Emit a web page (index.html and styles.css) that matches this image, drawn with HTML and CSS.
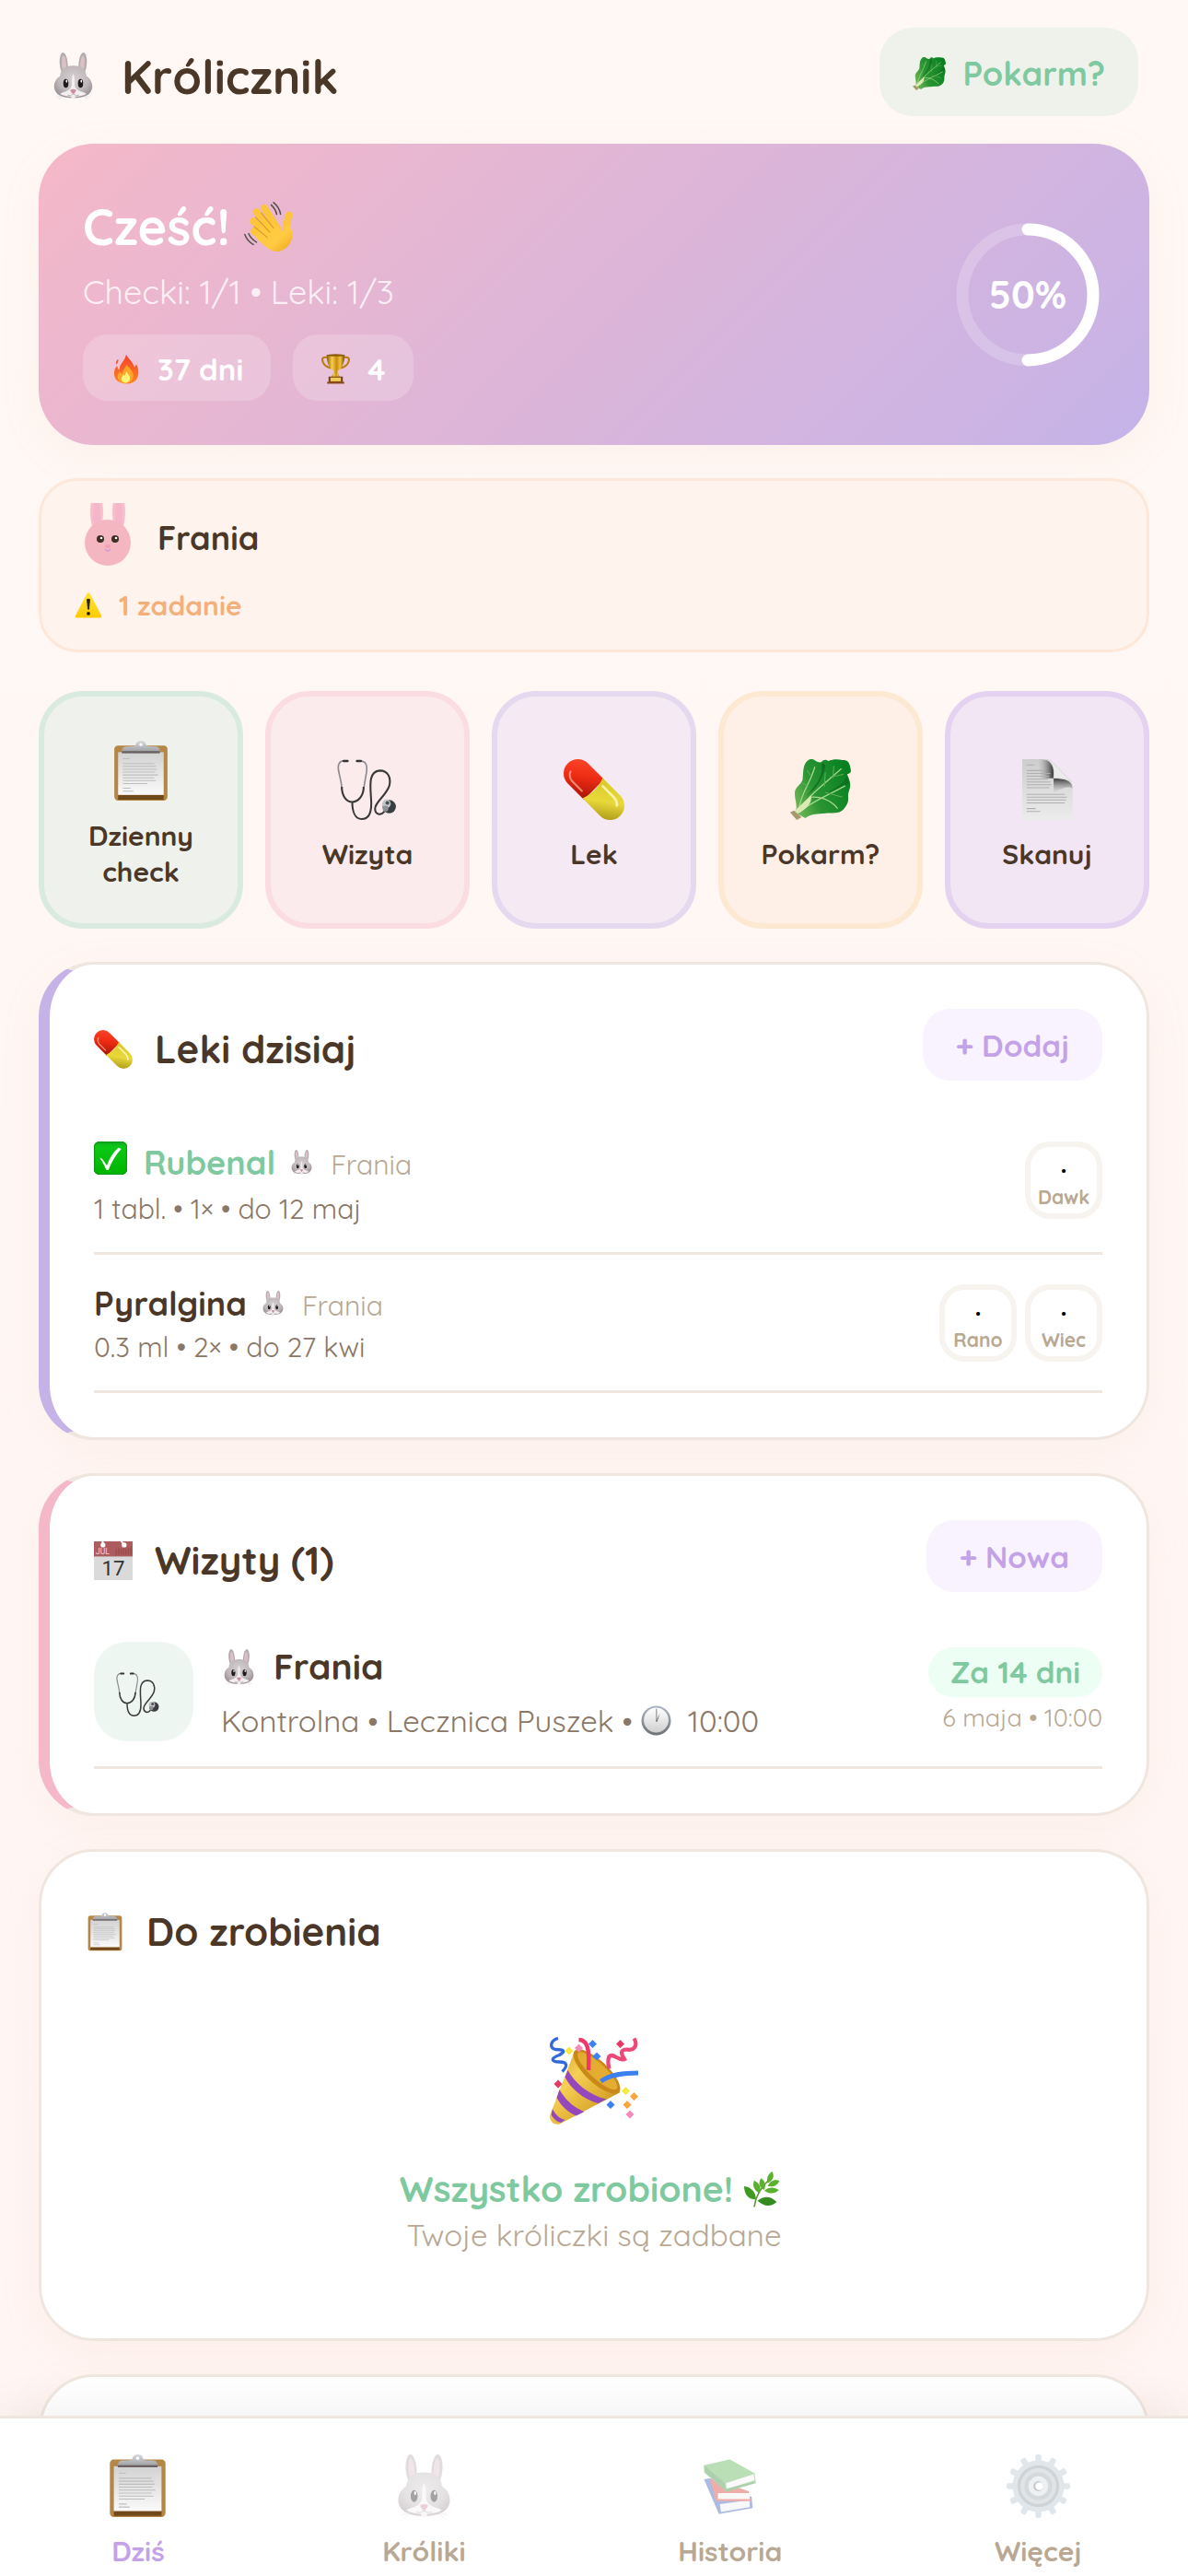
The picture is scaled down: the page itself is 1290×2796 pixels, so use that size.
FILE: index.html
```html
<!DOCTYPE html>
<html lang="pl">
<head>
<meta charset="utf-8">
<meta name="viewport" content="width=device-width, initial-scale=1">
<title>Królicznik</title>
<link rel="stylesheet" href="styles.css">
</head>
<body>
<svg class="sprite" aria-hidden="true">
  <defs>
    <radialGradient id="fur" cx=".5" cy=".4" r=".65"><stop offset="0" stop-color="#d6d0d2"/><stop offset=".6" stop-color="#c0b8bb"/><stop offset="1" stop-color="#978c90"/></radialGradient>
    <linearGradient id="hand" x1="0" y1="0" x2="1" y2="1"><stop offset="0" stop-color="#ffc83a"/><stop offset=".6" stop-color="#ffcb42"/><stop offset="1" stop-color="#eda51f"/></linearGradient>
    <linearGradient id="flame" x1="0" y1="0" x2="0" y2="1"><stop offset="0" stop-color="#f4412c"/><stop offset="1" stop-color="#ff8420"/></linearGradient>
    <linearGradient id="gold" x1="0" y1="0" x2="1" y2="0"><stop offset="0" stop-color="#8c5a04"/><stop offset=".3" stop-color="#f6cd4b"/><stop offset=".55" stop-color="#c98d10"/><stop offset=".75" stop-color="#f0c040"/><stop offset="1" stop-color="#7c4c02"/></linearGradient>
    <linearGradient id="leaf" x1="0" y1=".7" x2="1" y2=".3"><stop offset="0" stop-color="#6cb454"/><stop offset=".35" stop-color="#2a9433"/><stop offset="1" stop-color="#078021"/></linearGradient>
    <linearGradient id="paper" x1="0" y1="0" x2="0" y2="1"><stop offset="0" stop-color="#d2d2d3"/><stop offset="1" stop-color="#fafafa"/></linearGradient>
    <linearGradient id="steel" x1="0" y1="0" x2="0" y2="1"><stop offset="0" stop-color="#d8dade"/><stop offset="1" stop-color="#96989c"/></linearGradient>
    <linearGradient id="red" x1="0" y1="1" x2="1" y2="0"><stop offset="0" stop-color="#a81505"/><stop offset=".5" stop-color="#ee2c14"/><stop offset="1" stop-color="#ff4a2e"/></linearGradient>
    <linearGradient id="yellow" x1="0" y1="1" x2="1" y2="0"><stop offset="0" stop-color="#a08c10"/><stop offset=".5" stop-color="#e8d83a"/><stop offset="1" stop-color="#d8c828"/></linearGradient>
    <linearGradient id="warn" x1="0" y1="0" x2="0" y2="1"><stop offset="0" stop-color="#ffe43a"/><stop offset="1" stop-color="#ffcb00"/></linearGradient>
    <linearGradient id="page" x1="0" y1="0" x2="0" y2="1"><stop offset="0" stop-color="#cdcdcd"/><stop offset="1" stop-color="#ececec"/></linearGradient>
    <linearGradient id="shade" x1="0" y1="0" x2="0" y2="1"><stop offset="0" stop-color="#333"/><stop offset="1" stop-color="#aaa" stop-opacity="0"/></linearGradient>
    <linearGradient id="fold" x1="0" y1="0" x2="1" y2="0"><stop offset="0" stop-color="#aaa" stop-opacity="0"/><stop offset="1" stop-color="#333"/></linearGradient>
    <linearGradient id="dial" x1="0" y1="0" x2="0" y2="1"><stop offset="0" stop-color="#ffffff"/><stop offset="1" stop-color="#cfcfcf"/></linearGradient>
    <linearGradient id="rim" x1="0" y1="0" x2="0" y2="1"><stop offset="0" stop-color="#aab6c4"/><stop offset="1" stop-color="#6f7174"/></linearGradient>
    <linearGradient id="tick" x1="0" y1="0" x2="0" y2="1"><stop offset="0" stop-color="#15a524"/><stop offset=".15" stop-color="#0cc816"/><stop offset="1" stop-color="#00b400"/></linearGradient>
    <linearGradient id="cone" x1="0" y1="0" x2="1" y2="1"><stop offset="0" stop-color="#d9a32a"/><stop offset=".35" stop-color="#f6cf55"/><stop offset=".7" stop-color="#dba82c"/><stop offset="1" stop-color="#8d5d10"/></linearGradient>
  </defs>

  <symbol id="i-rabbit" viewBox="0 0 64 64">
    <ellipse cx="19" cy="15" rx="5.500" ry="15" fill="#b3acae" transform="rotate(-4 19 15)"/>
    <ellipse cx="45" cy="15" rx="5.500" ry="15" fill="#b3acae" transform="rotate(4 45 15)"/>
    <ellipse cx="19.500" cy="16" rx="3" ry="12" fill="#dcc0c6" transform="rotate(-4 19 16)"/>
    <ellipse cx="44.500" cy="16" rx="3" ry="12" fill="#dcc0c6" transform="rotate(4 44 16)"/>
    <path d="M32 18c-10 0-17 4-18 14-6 4-8 9-8 15 1 11 12 15 26 15s25-4 26-15c0-6-2-11-8-15-1-10-8-14-18-14z" fill="url(#fur)"/>
    <path d="M32 29c-2 3-2 9-2 14 0 5-3 8-8 10-4 1-6 2-8 3 4 3 12 4 18 4s14-1 18-4c-2-1-4-2-8-3-5-2-8-5-8-10 0-5 0-11-2-14z" fill="#f3eff0"/>
    <ellipse cx="22" cy="42" rx="3.500" ry="6" fill="#1d1b1d"/><ellipse cx="42" cy="42" rx="3.500" ry="6" fill="#1d1b1d"/>
    <ellipse cx="23" cy="39" rx="1.100" ry="2" fill="#fff"/><ellipse cx="43" cy="39" rx="1.100" ry="2" fill="#fff"/>
    <path d="M28 51q4-2 8 0 0 2-4 6-4-4-4-6z" fill="#cf8c9a"/>
    <path d="M24 58q5 2 8-2 3 4 8 2" fill="none" stroke="#b5aaad" stroke-width="1"/>
    <rect x="29" y="58" width="6" height="5" rx="2" fill="#f1ece9"/>
    <path d="M17 59l-8 2M17 60l-5 4M47 59l8 2M47 60l5 4" stroke="#d8d0d2" stroke-width=".7"/>
  </symbol>

  <symbol id="i-lettuce" viewBox="0 0 64 64">
    <path d="M5 56C9 50 4 42 5 34c1-5 6-7 8-12 1-7 0-14 4-19 3-4 7-4 10-1 2 1 4 2 6 1 2-3 5-3 7-1 5-2 10-2 15-1 7-1 8 5 9 11 0 3-3 3-4 4 2 5 4 9 3 14-1 3-2 6-2 9 1 5-1 10-5 14-5 5-12 3-19 4-8 1-14 0-21 5z" fill="url(#leaf)"/>
    <path d="M33 5c2 12-4 20-16 34 12-9 17-18 20-31 0-3-2-4-4-3z" fill="#0a5d1a" opacity=".6"/>
    <path d="M60 17c-4 10-14 14-22 19 10-2 19-6 24-11z" fill="#0a5d1a" opacity=".4"/>
    <path d="M10 56c8-18 24-28 44-46M12 54c12-10 28-16 46-26M9 54c2-18 12-28 17-46M22 40c8-1 20 2 28 12" fill="none" stroke="#a9d88d" stroke-width="1.200"/>
    <path d="M36 29l1-15M45 20l1-13M42 19l14-3M37 35l18 5M18 28l-6-3M22 18l-4-6" fill="none" stroke="#5fae55" stroke-width="1"/>
    <path d="M5 54l17-16c1 7-2 13-15 20z" fill="#d9eab4"/>
    <path d="M0 56l4-2 8 7-5 3z" fill="#a79870"/>
  </symbol>

  <symbol id="i-wave" viewBox="0 0 64 64">
    <g fill="none" stroke="#fdc53c" stroke-linecap="round" stroke-width="9">
      <path d="M26 8l18 28M16 13l20 26M12 25l22 20M13 38l20 14"/>
      <path d="M58 17c-3 6-3 12-4 22"/>
    </g>
    <path d="M33 26c6 1 14 8 17 13 2-2 2-6 5-9 5 0 8 8 7 16-2 10-10 18-20 18-9 0-17-9-26-17 0-10 9-21 17-21z" fill="url(#hand)"/>
    <path d="M22 14l16 20M15 20l18 19M13 32l17 14" stroke="#dc952b" stroke-width="1.300" stroke-linecap="round" fill="none"/>
    <path d="M38 1c5 4 8 9 9 15M35 4c4 4 6 7 7 12M1 42c2 6 6 10 11 13M6 41c2 5 5 8 10 11" stroke="#57504f" stroke-width="1.800" stroke-linecap="round" fill="none"/>
  </symbol>

  <symbol id="i-fire" viewBox="0 0 64 64">
    <path d="M33 1c3 9 15 16 17 27 3-1 4-4 4-7 7 12 6 28-1 35-11 10-32 9-41-1-6-8-6-22 2-30 1 5 2 8 5 9-1-14 12-18 14-33z" fill="url(#flame)"/>
    <path d="M34 22c3 8 14 12 14 25 0 9-8 15-17 15S15 56 15 48c0-5 2-8 4-11 2 4 4 5 6 5 0-8 7-11 9-20z" fill="#ffa52a"/>
    <path d="M33 36c2 5 8 9 8 16 0 5-4 9-9 9s-9-3-9-8 3-7 4-10c1 2 2 3 3 3 1-3 3-5 3-10z" fill="#fff47a"/>
    <ellipse cx="14" cy="17" rx="2" ry="5" fill="#f2552f" transform="rotate(20 14 17)"/>
  </symbol>

  <symbol id="i-trophy" viewBox="0 0 64 64">
    <path d="M16 8C5 5 2 10 5 17c3 8 9 11 17 13M48 8c11-3 14 2 11 9-3 8-9 11-17 13" fill="none" stroke="#b87f10" stroke-width="4"/>
    <path d="M13 2h38c0 14-4 29-15 34v8h-8v-8C17 31 13 16 13 2z" fill="url(#gold)"/>
    <ellipse cx="32" cy="3" rx="19" ry="2.500" fill="#8a5c08"/>
    <path d="M27 41h10l4 9H23z" fill="url(#gold)"/>
    <path d="M17 48h30v12H17z" fill="#7a3d10"/><path d="M21 50h22v8H21z" fill="#eacb5c"/>
    <path d="M14 59h36v4H14z" fill="#8b4a14"/>
  </symbol>

  <symbol id="i-warning" viewBox="0 0 64 64">
    <path d="M32 3c2 0 3 1 4 3l26 50c1 3 0 5-3 5H5c-3 0-4-2-3-5L28 6c1-2 2-3 4-3z" fill="url(#warn)"/>
    <path d="M29 18h6l-2 23h-2z" fill="#26200a" stroke="#26200a" stroke-linejoin="round" stroke-width="2"/><circle cx="32" cy="51" r="4" fill="#26200a"/>
  </symbol>

  <symbol id="i-clipboard" viewBox="0 0 64 64">
    <rect x="4" y="5" width="56" height="58" rx="4" fill="#b48746"/>
    <path d="M8 57h48v5H8z" fill="#714819"/>
    <rect x="8" y="12" width="48" height="45" fill="url(#paper)"/>
    <path d="M13 19h7M13 24h33M13 27h35M13 30h36M13 33h34M13 36h37M13 39h33M13 42h35M13 45h26M13 50h8M13 53h11" stroke="#bdbdbf" stroke-width="1"/>
    <path d="M12 10c1-4 3-4 8-4 5 0 6 0 7-3 1-4 9-4 10 0 1 3 2 3 7 3 5 0 7 0 8 4v3H12z" fill="url(#steel)"/>
    <path d="M12 11h40v2H12z" fill="#6a6060"/><circle cx="32" cy="4" r="1.600" fill="#fff"/>
  </symbol>

  <symbol id="i-stethoscope" viewBox="0 0 64 64">
    <path d="M9 2C2 1 0 6 2 14c1 6 3 10 3 18" fill="none" stroke="#8b8991" stroke-width="1.600"/>
    <path d="M22 2c9-1 10 5 9 12-1 6-2 10-3 18" fill="none" stroke="#8b8991" stroke-width="1.600"/>
    <path d="M5 29c0 10 5 16 11 16s12-6 12-16M16 45c0 10 3 18 10 18s10-6 10-16c0-14-5-34 9-35 9 0 12 8 10 16-3 10-15 17-15 24 0 6 6 8 10 3" fill="none" stroke="#38383b" stroke-width="2"/>
    <path d="M7 2h4M21 2h4" stroke="#333" stroke-width="2.500" stroke-linecap="round"/>
    <circle cx="55" cy="50" r="7" fill="#3b3e41"/><circle cx="52" cy="47" r="4.500" fill="#c2c5c8"/><circle cx="51" cy="52" r="3" fill="#8d9194"/><circle cx="53" cy="46" r="2" fill="#4c5054"/>
  </symbol>

  <symbol id="i-pill" viewBox="0 0 64 64">
    <g transform="rotate(-45 32 32)">
      <path d="M17 32V8a15 15 0 0 1 30 0v24z" fill="url(#red)"/>
      <path d="M17 30q15 6 30 0v26a15 15 0 0 1-30 0z" fill="url(#yellow)"/>
      <path d="M22 24V9q1-6 6-8" fill="none" stroke="#ffb3a0" stroke-width="2" stroke-linecap="round" opacity=".7"/>
      <path d="M41 36v16q0 6-4 9" fill="none" stroke="#fffbc0" stroke-width="2.500" stroke-linecap="round" opacity=".8"/>
    </g>
  </symbol>

  <symbol id="i-page" viewBox="0 0 64 64">
    <g transform="translate(-6 0) scale(1.180 1)">
      <path d="M10 0h18c6 1 10 4 10 9l2 11c8 0 15 3 15 10v34H10z" fill="url(#page)"/>
      <path d="M24 0c9 0 14 3 14 10v10H26z" fill="url(#fold)"/>
      <path d="M38 20c9 0 17 2 17 11-4-3-10-1-17 5z" fill="url(#shade)"/>
      <path d="M31 0c5 1 7 4 9 7l14 17c-4-3-9-4-16-4 1-8 0-16-7-20z" fill="#ebebeb" stroke="#cfcfcf" stroke-width=".6"/>
      <path d="M14 6h7M14 12h15M14 15h21M14 18h20M14 21h19M14 24h21M14 27h22M14 30h20M14 37h34M14 40h36M14 43h35M14 46h34M14 52h8M14 55h12" stroke="#b0b0b0" stroke-width="1"/>
    </g>
  </symbol>

  <symbol id="i-check" viewBox="0 0 64 64">
    <rect width="64" height="64" rx="10" fill="url(#tick)"/>
    <rect x="1" y="1" width="62" height="62" rx="9" fill="none" stroke="#079a12" stroke-width="2"/>
    <path d="M11 31c5 0 8 7 14 15 5-14 12-25 22-34l6 2C42 26 35 38 28 55h-4C20 46 16 38 11 31z" fill="#fff"/>
  </symbol>

  <symbol id="i-clock" viewBox="0 0 64 64">
    <circle cx="32" cy="32" r="31" fill="url(#rim)"/><circle cx="32" cy="31" r="26" fill="url(#dial)"/>
    <path d="M31 7h3v27h-3z" fill="#a9a9ab"/><path d="M40 17l-6 18-3-1z" fill="#77777a"/>
  </symbol>

  <symbol id="i-party" viewBox="0 0 64 64">
    <path d="M18 10L0 57c0 4 3 7 7 6l44-23z" fill="url(#cone)"/>
    <path d="M13 24c5 9 15 18 28 21l-6 3C24 45 15 37 11 29zM7 38c4 7 10 13 18 16l-6 3C12 54 8 49 5 44zM2 52c2 4 5 7 9 8l-3 2c-4-1-6-4-7-6z" fill="#9548bd"/>
    <ellipse cx="34" cy="25" rx="8" ry="22" transform="rotate(-47 34 25)" fill="#c88918"/>
    <ellipse cx="34.500" cy="24.500" rx="5.500" ry="19" transform="rotate(-47 34.500 24.500)" fill="#e4ad32"/>
    <path d="M21 2c6 0 8 6 7 22" fill="none" stroke="#ee3867" stroke-width="3"/>
    <path d="M37 32c7-5 16-6 27-6" fill="none" stroke="#3c7ff0" stroke-width="3.200"/>
    <path d="M6 1C1 2-1 8 4 9c6 0 8 1 3 4-6 2-7 5 0 5 6 0 6 3 2 7" fill="none" stroke="#3168dc" stroke-width="2.200"/>
    <path d="M61 1c3 5 0 9-5 8-6 0-4 4-2 7-4 2-8-5-11-2-1 2-1 5 0 9" fill="none" stroke="#ee4878" stroke-width="2.800"/>
    <path d="M31 2l3 3-3 3-3-3zM34 11l3 3-3 3-3-3zM44 46l3 3-3 3-3-3z" fill="#3c82f4"/>
    <path d="M14 7l3 3-3 3-3-3zM55 36l3 3-3 3-3-3z" fill="#f6e93c"/>
    <path d="M21 5l3 3-3 3-3-3zM58 53l3 3-3 3-3-3z" fill="#f48bb8"/>
    <path d="M51 2l3 3-3 3-3-3zM6 31l3 3-3 3-3-3z" fill="#e63a63"/>
    <path d="M61 40l3 3-3 3-3-3zM56 46l3 3-3 3-3-3z" fill="#fda43c"/>
  </symbol>

  <symbol id="i-herb" viewBox="0 0 64 64">
    <path d="M18 63c2-16 12-36 30-52" fill="none" stroke="#5d8f35" stroke-width="2.500"/>
    <g fill="#5bb02f"><path d="M50 0c5 9 1 16-8 21-3-9 1-17 8-21z"/><path d="M63 16c-4 10-12 12-21 10 3-8 11-13 21-10z"/><path d="M62 33c-8 8-17 7-26 1 8-7 18-7 26-1z"/><path d="M58 54c-11 10-23 8-34-2 11-9 23-9 34 2z" fill="#348b20"/><path d="M30 12c8 5 9 13 6 21-10-5-11-13-6-21z"/><path d="M18 16c10 5 13 13 10 23-10-5-14-13-10-23z"/><path d="M0 26c12 2 21 10 21 24C8 50 0 41 0 26z" fill="#409b22"/></g>
  </symbol>

  <symbol id="i-books" viewBox="0 0 64 64">
    <path d="M6 25l6-1 42 19 1 11-34 6z" fill="#2f58b8"/><path d="M22 50l30-4v7l-29 5z" fill="#eee"/>
    <path d="M12 24l39 13 2 10H18z" fill="#d8352e"/><path d="M20 39h32v6H20z" fill="#f4f2f0"/>
    <path d="M32 5L6 11v7l21 18 31-9-1-8z" fill="#54b04b"/><path d="M28 29l28-9 1 6-28 9z" fill="#f3f3f3"/><path d="M6 11l21 18v7L7 18z" fill="#338a34"/><path d="M27 35l31-8v2l-31 9z" fill="#338a34"/>
  </symbol>

  <symbol id="i-gear" viewBox="0 0 64 64">
    <g fill="#b6c3cc">
      <circle cx="32" cy="32" r="26"/>
      <rect x="29" y="0" width="6" height="64" rx="2"/><rect x="29" y="0" width="6" height="64" rx="2" transform="rotate(30 32 32)"/><rect x="29" y="0" width="6" height="64" rx="2" transform="rotate(60 32 32)"/><rect x="29" y="0" width="6" height="64" rx="2" transform="rotate(90 32 32)"/><rect x="29" y="0" width="6" height="64" rx="2" transform="rotate(120 32 32)"/><rect x="29" y="0" width="6" height="64" rx="2" transform="rotate(150 32 32)"/>
    </g>
    <circle cx="32" cy="32" r="21" fill="#89939b"/><circle cx="32" cy="32" r="18" fill="#b5bcc1"/><circle cx="32" cy="32" r="14" fill="#98a1a8"/>
    <circle cx="32" cy="32" r="10" fill="#d4dce2"/><circle cx="32" cy="32" r="5" fill="#727a80"/><circle cx="33" cy="32" r="4" fill="#fff"/>
  </symbol>
</svg>

<div class="app">
  <main class="screen">
    <header class="topbar">
      <h1 class="brand"><svg class="icon-51"><use href="#i-rabbit"/></svg>Królicznik</h1>
      <button class="food-button" type="button"><svg class="icon-36"><use href="#i-lettuce"/></svg>Pokarm?</button>
    </header>

    <section class="hero">
      <div class="hero-text">
        <h2 class="hero-title">Cześć!<svg class="icon-54"><use href="#i-wave"/></svg></h2>
        <p class="hero-sub">Checki: 1/1 • Leki: 1/3</p>
        <div class="badges">
          <span class="badge"><svg class="icon-33"><use href="#i-fire"/></svg>37 dni</span>
          <span class="badge"><svg class="icon-33"><use href="#i-trophy"/></svg>4</span>
        </div>
      </div>
      <div class="ring">
        <svg class="ring-track" viewBox="0 0 168 168" aria-hidden="true">
          <circle cx="84" cy="84" r="71" fill="none" stroke="#fff" stroke-opacity=".2" stroke-width="13"/>
          <path d="M84 13a71 71 0 0 1 0 142" fill="none" stroke="#fff" stroke-width="13" stroke-linecap="round"/>
        </svg>
        <span class="ring-value">50%</span>
      </div>
    </section>

    <a class="pet" href="#frania">
      <span class="pet-head">
        <svg class="pet-avatar" viewBox="0 0 72 72" aria-hidden="true">
          <ellipse cx="24" cy="10" rx="7" ry="22" fill="#f5bfcc"/><ellipse cx="48" cy="10" rx="7" ry="22" fill="#f5bfcc"/>
          <ellipse cx="24" cy="12" rx="4" ry="16" fill="#f4b6c8"/><ellipse cx="48" cy="12" rx="4" ry="16" fill="#f4b6c8"/>
          <circle cx="36" cy="43" r="25" fill="#f4b6c1"/>
          <circle cx="28" cy="39" r="4" fill="#3d2c20"/><circle cx="44" cy="39" r="4" fill="#3d2c20"/>
          <circle cx="29" cy="38" r="1.300" fill="#fff"/><circle cx="45" cy="38" r="1.300" fill="#fff"/>
          <ellipse cx="36" cy="47" rx="3" ry="2" fill="#f79fb3"/><path d="M33 50q3 4 6 0" fill="none" stroke="#d79ad0" stroke-width="1.500"/>
        </svg>
        <span class="pet-name">Frania</span>
      </span>
      <span class="pet-task"><svg class="icon-30"><use href="#i-warning"/></svg>1 zadanie</span>
    </a>

    <nav class="actions" aria-label="Szybkie akcje">
      <button class="action green" type="button"><svg class="icon-66"><use href="#i-clipboard"/></svg><span>Dzienny check</span></button>
      <button class="action pink" type="button"><svg class="icon-66"><use href="#i-stethoscope"/></svg><span>Wizyta</span></button>
      <button class="action purple" type="button"><svg class="icon-66"><use href="#i-pill"/></svg><span>Lek</span></button>
      <button class="action orange" type="button"><svg class="icon-66"><use href="#i-lettuce"/></svg><span>Pokarm?</span></button>
      <button class="action violet" type="button"><svg class="icon-66"><use href="#i-page"/></svg><span>Skanuj</span></button>
    </nav>

    <section class="card accent-purple">
      <header class="card-head">
        <h2 class="card-title"><svg class="icon-42"><use href="#i-pill"/></svg>Leki dzisiaj</h2>
        <button class="add-button" type="button">+ Dodaj</button>
      </header>
      <div class="row">
        <div class="row-info">
          <p class="med-name done"><svg class="icon-36"><use href="#i-check"/></svg><strong>Rubenal</strong><span class="med-pet"><svg class="icon-27"><use href="#i-rabbit"/></svg>Frania</span></p>
          <p class="med-sub">1 tabl. • 1× • do 12 maj</p>
        </div>
        <div class="doses">
          <button class="dose" type="button"><span class="dose-dot">·</span><span>Dawk</span></button>
        </div>
      </div>
      <div class="row">
        <div class="row-info">
          <p class="med-name"><strong>Pyralgina</strong><span class="med-pet"><svg class="icon-27"><use href="#i-rabbit"/></svg>Frania</span></p>
          <p class="med-sub">0.3 ml • 2× • do 27 kwi</p>
        </div>
        <div class="doses">
          <button class="dose" type="button"><span class="dose-dot">·</span><span>Rano</span></button>
          <button class="dose" type="button"><span class="dose-dot">·</span><span>Wiec</span></button>
        </div>
      </div>
    </section>

    <section class="card accent-pink">
      <header class="card-head">
        <h2 class="card-title">
          <svg class="icon-42" viewBox="0 0 64 64" aria-hidden="true">
            <rect width="64" height="64" fill="#dadada"/><rect width="64" height="25" fill="#ad5c5d"/>
            <path d="M37 22v-9M41 22V11M45 22v-9M49 22V11M53 22v-9M57 22V10M61 22V9" stroke="#9a4a4c" stroke-width="2"/>
            <circle cx="15" cy="6" r="4" fill="#fff"/><circle cx="50" cy="6" r="4" fill="#fff"/><path d="M13 0h3v6h-3zM44 0l4 6 3-2-4-4z" fill="#fff"/>
            <text class="cal-month" x="3" y="22">JUL</text>
            <text class="cal-day" x="32" y="57">17</text>
          </svg>Wizyty (1)
        </h2>
        <button class="add-button" type="button">+ Nowa</button>
      </header>
      <div class="row visit">
        <div class="visit-icon"><svg class="icon-48"><use href="#i-stethoscope"/></svg></div>
        <div class="row-info">
          <h3 class="visit-name"><svg class="icon-39"><use href="#i-rabbit"/></svg>Frania</h3>
          <p class="visit-sub">Kontrolna • Lecznica Puszek •<svg class="icon-33"><use href="#i-clock"/></svg>10:00</p>
        </div>
        <div class="visit-when">
          <span class="when-badge">Za 14 dni</span>
          <span class="when-date">6 maja • 10:00</span>
        </div>
      </div>
    </section>

    <section class="card">
      <h2 class="todo-title"><svg class="icon-42"><use href="#i-clipboard"/></svg>Do zrobienia</h2>
      <div class="empty">
        <svg class="icon-96"><use href="#i-party"/></svg>
        <p class="empty-title">Wszystko zrobione!<svg class="icon-39"><use href="#i-herb"/></svg></p>
        <p class="empty-sub">Twoje króliczki są zadbane</p>
      </div>
    </section>

    <section class="card next-card"></section>
  </main>

  <nav class="tabs" aria-label="Menu">
    <a class="tab active" href="#dzis"><svg class="icon-69"><use href="#i-clipboard"/></svg>Dziś</a>
    <a class="tab" href="#kroliki"><svg class="icon-69"><use href="#i-rabbit"/></svg>Króliki</a>
    <a class="tab" href="#historia"><svg class="icon-69"><use href="#i-books"/></svg>Historia</a>
    <a class="tab" href="#wiecej"><svg class="icon-69"><use href="#i-gear"/></svg>Więcej</a>
  </nav>
</div>
</body>
</html>
```
FILE: styles.css
```css
:root {
  --ink: #4a3728;
  --ink-soft: #8b7766;
  --ink-mute: #b8a894;
  --line: #efe7df;
  --green: #7ec9a0;
  --violet: #c4a2e8;
  --purple: #c5b3e8;
  --pink: #f5b8c8;
}

* { box-sizing: border-box; }

body {
  margin: 0;
  background: linear-gradient(180deg, #fff8f4, #fff5f2);
  color: var(--ink);
  font-family: Quicksand, Lato, sans-serif;
  font-size: 36px;
}

h1, h2, h3, p { margin: 0; font-weight: 700; }
p { font-weight: 400; }
a { color: inherit; text-decoration: none; }
button { border: 0; padding: 0; font: inherit; font-weight: 700; cursor: pointer; }
svg { display: block; flex: none; }

.sprite { position: absolute; width: 0; height: 0; }

.icon-27 { width: 27px; height: 27px; }
.icon-30 { width: 30px; height: 30px; }
.icon-33 { width: 33px; height: 33px; }
.icon-36 { width: 36px; height: 36px; }
.icon-39 { width: 39px; height: 39px; }
.icon-42 { width: 42px; height: 42px; }
.icon-48 { width: 48px; height: 48px; }
.icon-51 { width: 51px; height: 51px; }
.icon-54 { width: 54px; height: 54px; }
.icon-66 { width: 66px; height: 66px; }
.icon-69 { width: 69px; height: 69px; }
.icon-96 { width: 96px; height: 96px; }

.app { display: flex; flex-direction: column; height: 100vh; }

.screen {
  flex: 1;
  min-height: 0;
  overflow-y: auto;
  scrollbar-width: none;
  padding: 0 42px 36px;
}

/* Top bar */
.topbar {
  display: flex;
  align-items: center;
  justify-content: space-between;
  padding: 30px 12px;
}
.brand {
  display: flex;
  align-items: center;
  gap: 27px;
  padding-top: 9px;
  font-size: 51px;
  line-height: 66px;
}
.food-button {
  display: flex;
  align-items: center;
  gap: 18px;
  height: 96px;
  padding: 3px 36px 0;
  border-radius: 36px;
  background: #eef2ea;
  color: var(--green);
  font-size: 36px;
}

/* Greeting */
.hero {
  display: flex;
  align-items: center;
  justify-content: space-between;
  padding: 48px;
  border-radius: 60px;
  background: linear-gradient(135deg, var(--pink), var(--purple));
  box-shadow: 0 12px 48px rgba(225, 160, 140, .08);
  color: #fff;
}
.hero-title { display: flex; align-items: center; gap: 15px; font-size: 54px; line-height: 84px; }
.hero-sub { color: rgba(255, 255, 255, .8); line-height: 57px; }
.badges { display: flex; gap: 24px; margin-top: 18px; }
.badge {
  display: flex;
  align-items: center;
  gap: 18px;
  height: 72px;
  padding: 3px 30px 0;
  border-radius: 27px;
  background: rgba(255, 255, 255, .2);
  font-size: 33px;
  font-weight: 700;
}
.ring { display: grid; place-items: center; width: 168px; height: 168px; }
.ring-track, .ring-value { grid-area: 1 / 1; }
.ring-track { width: 168px; height: 168px; }
.ring-value { font-size: 42px; font-weight: 700; }

/* Pet status */
.pet {
  display: block;
  margin-top: 36px;
  padding: 24px 36px;
  border: 3px solid #fde7d8;
  border-radius: 42px;
  background: #fff4ed;
  font-weight: 700;
}
.pet-head { display: flex; align-items: center; gap: 18px; }
.pet-avatar { width: 72px; height: 72px; }
.pet-name { padding-top: 3px; font-size: 36px; }
.pet-task {
  display: flex;
  align-items: center;
  gap: 18px;
  margin-top: 15px;
  color: #f3b07a;
  font-size: 30px;
  line-height: 48px;
}

/* Quick actions */
.actions { display: grid; grid-template-columns: repeat(5, 1fr); gap: 24px; margin-top: 42px; }
.action {
  display: flex;
  flex-direction: column;
  align-items: center;
  justify-content: center;
  gap: 18px;
  padding: 48px 24px 36px;
  border: 6px solid;
  border-radius: 48px;
  color: var(--ink);
  font-size: 30px;
  line-height: 39px;
}
.green { background: #eff2ec; border-color: #d9ebe0; }
.pink { background: #fcebec; border-color: #fbdce2; }
.purple { background: #f5eaf3; border-color: #e5d9f0; }
.orange { background: #fef0e6; border-color: #fde8d2; }
.violet { background: #f3e6f4; border-color: #e4d2f0; }

/* Cards */
.card {
  margin-top: 36px;
  padding: 48px;
  border: 3px solid var(--line);
  border-radius: 60px;
  background: #fff;
  box-shadow: 0 12px 48px rgba(225, 160, 140, .08);
}
.accent-purple { border-left: 12px solid var(--purple); }
.accent-pink { border-left: 12px solid var(--pink); }
.card-head { display: flex; align-items: center; justify-content: space-between; margin-bottom: 30px; }
.card-title, .todo-title { display: flex; align-items: center; gap: 24px; font-size: 42px; }
.card-title { padding-top: 9px; line-height: 60px; }
.add-button {
  height: 78px;
  padding: 0 36px;
  border-radius: 30px;
  background: #f8f3fe;
  color: var(--violet);
  font-size: 33px;
}
.cal-month { font: 400 13px Roboto, sans-serif; fill: #efd6d6; }
.cal-day { font: 400 34px Roboto, sans-serif; fill: #333; text-anchor: middle; }

.row { display: flex; align-items: center; padding: 24px 0; border-bottom: 3px solid var(--line); }
.row-info { flex: 1; min-width: 0; }

/* Medicines */
.med-name { display: flex; align-items: baseline; font-size: 36px; line-height: 57px; }
.med-name.done { gap: 18px; height: 66px; padding-top: 6px; }
.med-name.done strong { color: var(--green); }
.med-name svg { margin-bottom: -4px; }
.med-pet {
  display: flex;
  align-items: baseline;
  gap: 18px;
  margin-left: 15px;
  color: var(--ink-mute);
  font-size: 30px;
  line-height: 36px;
}
.done .med-pet { margin-left: -3px; }
.med-sub { padding-bottom: 3px; color: var(--ink-soft); font-size: 30px; line-height: 39px; }
.doses { display: flex; gap: 9px; }
.dose {
  display: flex;
  flex-direction: column;
  align-items: center;
  justify-content: center;
  width: 84px;
  height: 84px;
  border: 6px solid #f7f3ee;
  border-radius: 27px;
  background: #fff;
  color: var(--ink-mute);
  font-size: 21px;
  line-height: 24px;
}
.dose-dot { color: #000; font-size: 30px; line-height: 36px; }

/* Visits */
.visit { align-items: flex-start; }
.visit-icon {
  display: grid;
  place-items: center;
  width: 108px;
  height: 108px;
  margin-right: 30px;
  padding: 6px 12px 0 0;
  border-radius: 36px;
  background: #eef6f1;
}
.visit-name { display: flex; align-items: center; gap: 18px; font-size: 39px; line-height: 54px; }
.visit-sub { display: flex; align-items: center; gap: 18px; margin-top: 3px; padding-top: 3px; color: var(--ink-soft); font-size: 33px; line-height: 51px; }
.visit-sub svg { margin-left: -9px; }
.visit-when { display: flex; flex-direction: column; align-items: flex-end; padding-top: 6px; }
.when-badge {
  padding: 0 24px;
  border-radius: 27px;
  background: #edfef5;
  color: var(--green);
  font-size: 33px;
  font-weight: 700;
  line-height: 54px;
}
.when-date { color: var(--ink-mute); font-size: 27px; line-height: 45px; }

/* To do */
.todo-title { padding-top: 3px; line-height: 72px; margin-bottom: 18px; }
.empty { display: flex; flex-direction: column; align-items: center; padding: 60px 0 39px; }
.empty-title {
  display: flex;
  align-items: center;
  gap: 12px;
  margin-top: 45px;
  padding-right: 9px;
  color: var(--green);
  font-size: 39px;
  font-weight: 700;
  line-height: 48px;
}
.empty-sub { color: var(--ink-mute); font-size: 33px; line-height: 51px; }
.next-card { min-height: 300px; }

/* Bottom tabs */
.tabs {
  position: relative;
  display: flex;
  justify-content: space-around;
  padding: 39px 0 9px;
  border-top: 3px solid var(--line);
  background: #fff;
  box-shadow: 0 -6px 48px rgba(0, 0, 0, .06);
}
.tab {
  display: flex;
  flex-direction: column;
  align-items: center;
  gap: 18px;
  color: var(--ink-mute);
  font-size: 30px;
  font-weight: 700;
  line-height: 36px;
}
.tab svg { opacity: .4; }
.tab.active { color: var(--violet); }
.tab.active svg { opacity: 1; }
```
